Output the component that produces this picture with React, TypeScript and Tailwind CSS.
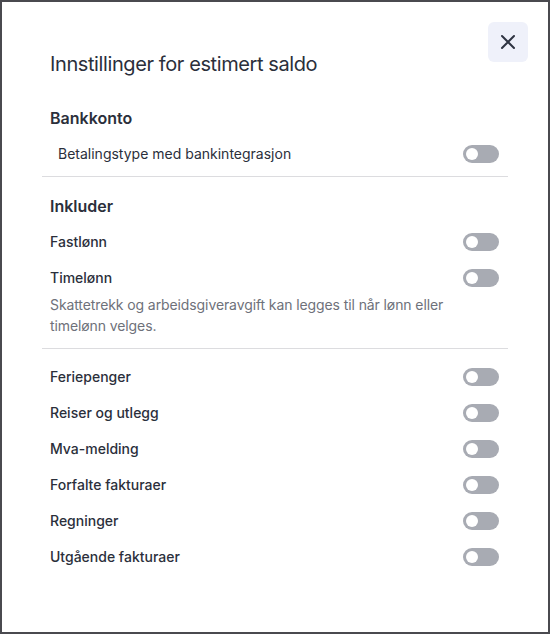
import React from "react";

function Toggle() {
  return (
    <div className="w-9 h-[18px] rounded-full bg-[#a8abb3] flex items-center shrink-0">
      <div className="w-[12px] h-[12px] rounded-full bg-white ml-[3px]" />
    </div>
  );
}

function Row({ label, indent = false, weight = "font-medium" }: { label: string; indent?: boolean; weight?: string }) {
  return (
    <div className="h-9 flex items-center justify-between pl-2 pr-[9px]">
      <span className={`text-sm text-[#2b2f3b] ${weight} ${indent ? "pl-2" : ""}`}>{label}</span>
      <Toggle />
    </div>
  );
}

export default function App() {
  return (
    <div
      className="w-[550px] h-[634px] bg-white border-2 border-[#4a4a4f] relative overflow-hidden"
      style={{ fontFamily: "Inter, 'Noto Sans', sans-serif" }}
    >
      <button className="absolute top-[20px] right-[20px] w-10 h-10 rounded-md bg-[#eff1fa] flex items-center justify-center">
        <svg width="18" height="18" viewBox="0 0 18 18" fill="none" stroke="#2f3442" strokeWidth="2" strokeLinecap="round">
          <path d="M3 3L15 15M15 3L3 15" />
        </svg>
      </button>
      <div className="px-[40px] pt-[48px]">
        <h1 className="px-2 text-xl leading-7 font-normal tracking-[-0.4px] text-[#2b2f3b]">Innstillinger for estimert saldo</h1>
        <div className="mt-[22px] h-9 flex items-center px-2 text-base font-semibold text-[#2b2f3b]">Bankkonto</div>
        <Row label="Betalingstype med bankintegrasjon" indent weight="font-normal" />
        <div className="mt-1 h-px bg-[#dcdcdf]" />
        <div className="mt-[11px] h-9 flex items-center px-2 text-base font-semibold text-[#2b2f3b]">Inkluder</div>
        <Row label="Fastlønn" />
        <Row label="Timelønn" />
        <p className="-mt-[2px] pl-2 pr-[60px] text-sm leading-[21px] text-[#6e717a] tracking-[-0.1px]">
          Skattetrekk og arbeidsgiveravgift kan legges til når lønn eller timelønn velges.
        </p>
        <div className="mt-[12px] h-px bg-[#dcdcdf]" />
        <div className="mt-[10px]">
          <Row label="Feriepenger" />
          <Row label="Reiser og utlegg" />
          <Row label="Mva-melding" />
          <Row label="Forfalte fakturaer" />
          <Row label="Regninger" />
          <Row label="Utgående fakturaer" />
        </div>
      </div>
    </div>
  );
}
